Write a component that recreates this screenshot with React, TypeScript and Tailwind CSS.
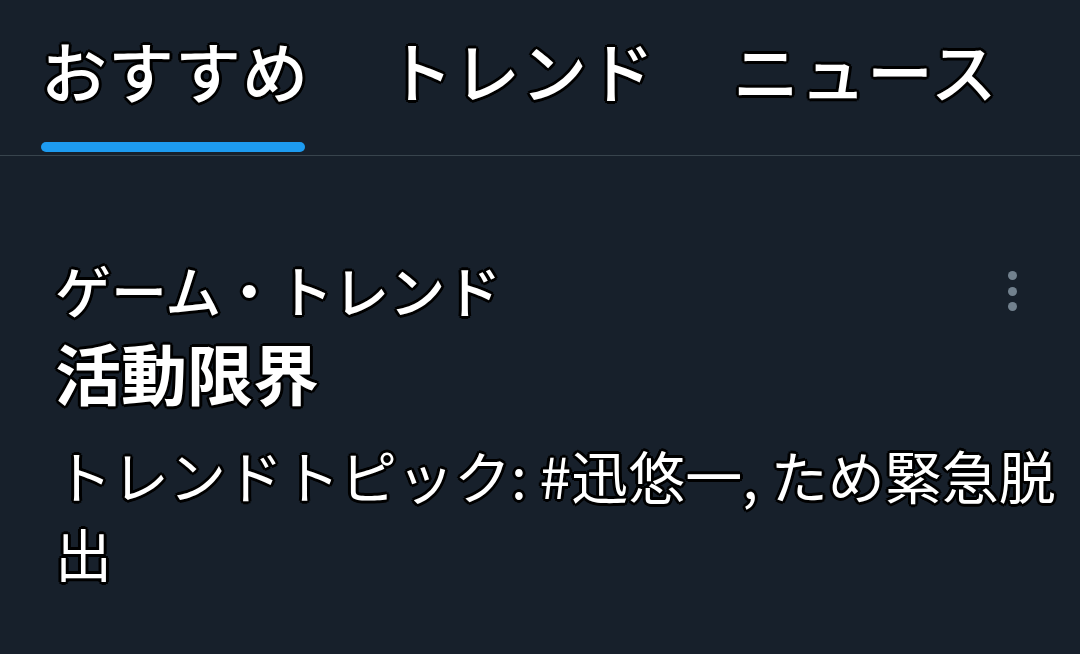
const outline =
  "[text-shadow:-2px_-2px_0_#000,2px_-2px_0_#000,-2px_2px_0_#000,2px_2px_0_#000,0_3px_0_#000,0_-3px_0_#000,3px_0_0_#000,-3px_0_0_#000]";

const tabs = [
  { label: "おすすめ", active: true },
  { label: "トレンド", active: false },
  { label: "ニュース", active: false },
];

export default function App() {
  return (
    <div className="w-[1080px] h-[654px] overflow-hidden bg-[#17202b] text-white font-['Noto_Sans_CJK_JP','Noto_Sans',sans-serif]">
      {/* Tabs */}
      <div className="flex gap-[78px] pl-[41px] border-b border-[#38444d] h-[156px]">
        {tabs.map((t) => (
          <div key={t.label} className="flex flex-col items-start">
            <div className={`mt-[36px] text-[66px] leading-[66px] font-medium tracking-[1px] ${outline}`}>{t.label}</div>
            {t.active ? (
              <div className="mt-[40px] h-[10px] w-[264px] rounded-full bg-[#1d9bf0]" />
            ) : null}
          </div>
        ))}
      </div>

      {/* Trend item */}
      <div className="flex pl-[55px] pr-[16px] pt-[103px]">
        <div className="flex-1">
          <div className={`text-[56px] leading-[60px] font-medium ${outline}`}>ゲーム・トレンド</div>
          <div className={`mt-[16px] text-[66px] leading-[72px] font-bold ${outline}`}>活動限界</div>
          <div className={`mt-[28px] w-[1010px] text-[57px] leading-[78px] ${outline}`}>
            トレンドトピック: #迅悠一, ため緊急脱出
          </div>
        </div>
        <div className="flex flex-col gap-[6.5px] pt-[12px] -ml-[70px] mr-[47px]">
          <span className="block w-[9px] h-[9px] rounded-full bg-[#72818e]" />
          <span className="block w-[9px] h-[9px] rounded-full bg-[#72818e]" />
          <span className="block w-[9px] h-[9px] rounded-full bg-[#72818e]" />
        </div>
      </div>
    </div>
  );
}
